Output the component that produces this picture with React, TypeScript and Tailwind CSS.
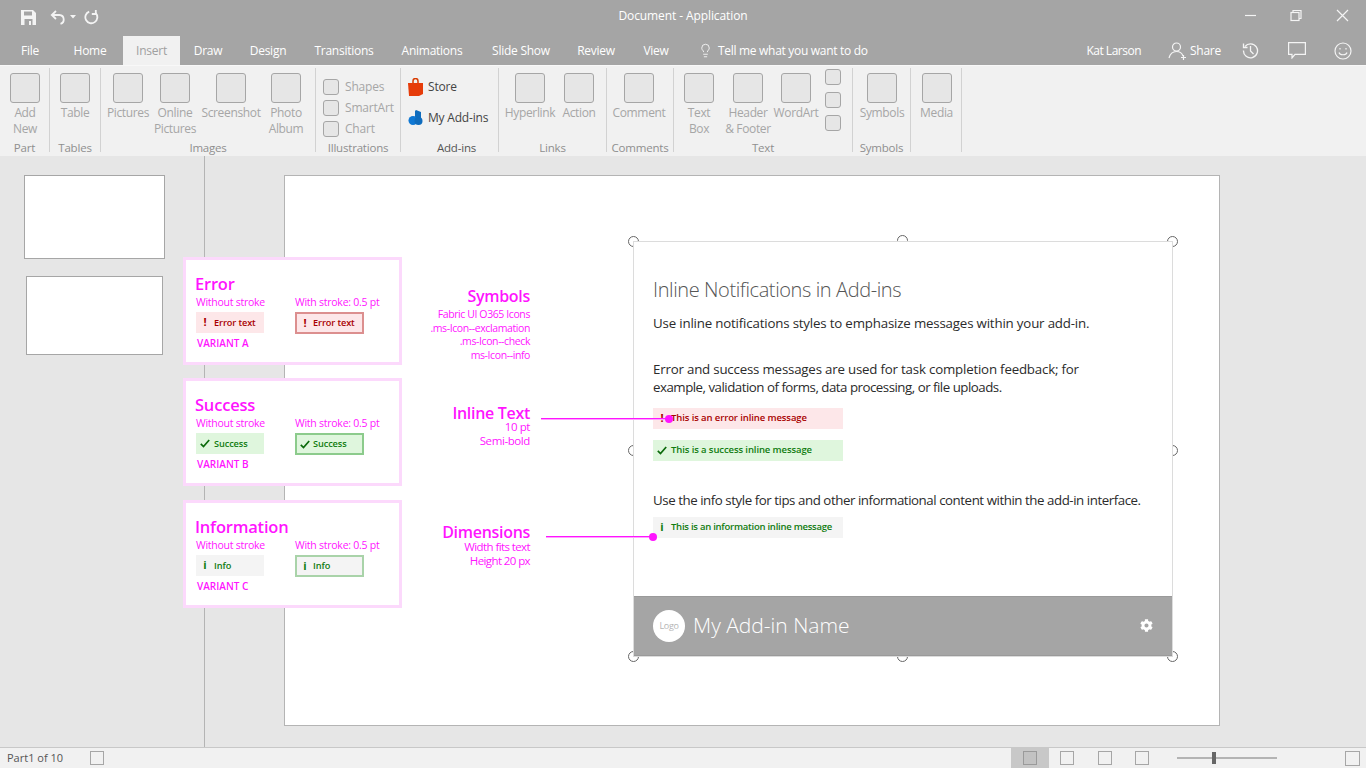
import { Lightbulb } from "lucide-react";
import { FaCog } from "react-icons/fa";

type RibbonItem = { top: string; bottom?: string; width: string };

function Square({ className = "w-[30px] h-[30px]" }: { className?: string }) {
    return <div className={`${className} shrink-0 bg-[#e6e6e6] border-[1.5px] border-[#a6a6a6] rounded-[3px]`} />;
}

function RibbonButton({ item }: { item: RibbonItem }) {
    return (
        <div className={`${item.width} shrink-0 flex flex-col items-center`}>
            <Square />
            <div className="mt-[2px] text-[12px] leading-[16px] tracking-[-0.35px] text-[#a6a6a6] text-center whitespace-nowrap">
                <div>{item.top}</div>
                {item.bottom && <div>{item.bottom}</div>}
            </div>
        </div>
    );
}

function RibbonGroup({ label, className, labelClass = "text-[#8f8f8f]", children }: { label: string; className: string; labelClass?: string; children: React.ReactNode }) {
    return (
        <div className={`${className} shrink-0 h-[84px] mt-[2px] pt-[5px] border-r-[1.5px] border-[#d2d2d2] flex flex-col`}>
            <div className="flex flex-1 min-h-0">{children}</div>
            <div className={`-mb-[3px] h-[14px] text-[11.5px] leading-[14px] tracking-[-0.2px] text-center whitespace-nowrap ${labelClass}`}>{label}</div>
        </div>
    );
}

function SmallCheck({ label }: { label: string }) {
    return (
        <div className="flex items-center h-[21px] gap-[6px]">
            <Square className="w-[16px] h-[16px]" />
            <span className="text-[12px] tracking-[-0.2px] text-[#a6a6a6] whitespace-nowrap">{label}</span>
        </div>
    );
}

function Ribbon() {
    return (
        <div className="h-[91px] bg-[#f1f1f1] border-t border-[#f8f8f8] flex">
            <RibbonGroup label="Part" className="w-[50px]">
                <RibbonButton item={{ top: "Add", bottom: "New", width: "w-[50px]" }} />
            </RibbonGroup>
            <RibbonGroup label="Tables" className="w-[51px]">
                <RibbonButton item={{ top: "Table", width: "w-[50px]" }} />
            </RibbonGroup>
            <RibbonGroup label="Images" className="w-[215px]">
                <div className="w-[2px]" />
                <RibbonButton item={{ top: "Pictures", width: "w-[50px]" }} />
                <RibbonButton item={{ top: "Online", bottom: "Pictures", width: "w-[44px]" }} />
                <RibbonButton item={{ top: "Screenshot", width: "w-[68px]" }} />
                <RibbonButton item={{ top: "Photo", bottom: "Album", width: "w-[42px]" }} />
            </RibbonGroup>
            <RibbonGroup label="Illustrations" className="w-[85px]">
                <div className="pl-[7px] pt-[3px]">
                    <SmallCheck label="Shapes" />
                    <SmallCheck label="SmartArt" />
                    <SmallCheck label="Chart" />
                </div>
            </RibbonGroup>
            <RibbonGroup label="Add-ins" labelClass="text-[#555555] pl-[14px]" className="w-[98px]">
                <div className="pl-[7px] pt-[4px] text-[12px] tracking-[-0.2px] text-[#444444]">
                    <div className="flex items-center gap-[5px] h-[20px]">
                        <svg width="15" height="18" viewBox="0 0 15 18">
                            <path d="M5 5V3a2.5 2.5 0 0 1 5 0v2" fill="none" stroke="#d83b01" strokeWidth="1.5" />
                            <path d="M0 5h15v11l-4 2H1z" fill="#e63c0a" />
                        </svg>
                        <span>Store</span>
                    </div>
                    <div className="flex items-center gap-[5px] h-[20px] mt-[11px]">
                        <svg width="15" height="16" viewBox="0 0 15 16">
                            <path d="M8 0l5 2v7H7V1z" fill="#0f6cbd" />
                            <circle cx="5" cy="10.500" r="4.500" fill="#0f78d4" />
                            <circle cx="10.500" cy="11" r="4" fill="#0f6cbd" />
                        </svg>
                        <span className="whitespace-nowrap">My Add-ins</span>
                    </div>
                </div>
            </RibbonGroup>
            <RibbonGroup label="Links" className="w-[108px]">
                <div className="w-[3px]" />
                <RibbonButton item={{ top: "Hyperlink", width: "w-[56px]" }} />
                <RibbonButton item={{ top: "Action", width: "w-[42px]" }} />
            </RibbonGroup>
            <RibbonGroup label="Comments" className="w-[67px]">
                <div className="w-[2px]" />
                <RibbonButton item={{ top: "Comment", width: "w-[60px]" }} />
            </RibbonGroup>
            <RibbonGroup label="Text" className="w-[179px]">
                <div className="w-[2px]" />
                <RibbonButton item={{ top: "Text", bottom: "Box", width: "w-[46px]" }} />
                <RibbonButton item={{ top: "Header", bottom: "& Footer", width: "w-[52px]" }} />
                <RibbonButton item={{ top: "WordArt", width: "w-[44px]" }} />
                <div className="ml-[7px] -mt-[4px] flex flex-col gap-[7px]">
                    <Square className="w-[16px] h-[16px]" />
                    <Square className="w-[16px] h-[16px]" />
                    <Square className="w-[16px] h-[16px]" />
                </div>
            </RibbonGroup>
            <RibbonGroup label="Symbols" className="w-[58px]">
                <RibbonButton item={{ top: "Symbols", width: "w-[58px]" }} />
            </RibbonGroup>
            <RibbonGroup label="" className="w-[51px]">
                <RibbonButton item={{ top: "Media", width: "w-[51px]" }} />
            </RibbonGroup>
        </div>
    );
}

function TitleBar() {
    const tabs = [
        { name: "File", w: "w-[60px]" },
        { name: "Home", w: "w-[63px] pr-[3px]" },
        { name: "Insert", w: "w-[57px]", active: true },
        { name: "Draw", w: "w-[56px]" },
        { name: "Design", w: "w-[64px]" },
        { name: "Transitions", w: "w-[88px]" },
        { name: "Animations", w: "w-[88px]" },
        { name: "Slide Show", w: "w-[90px]" },
        { name: "Review", w: "w-[60px]" },
        { name: "View", w: "w-[60px]" },
    ];
    return (
        <div className="h-[65px] bg-[#a5a5a5] text-white">
            <div className="relative h-[36px] pb-[2px] flex items-center">
                <svg className="ml-[21px]" width="15" height="15" viewBox="0 0 15 15">
                    <path d="M0 0h12l3 3v12H0z" fill="#f4f4f4" />
                    <rect x="3" y="1.5" width="8" height="4" fill="#a5a5a5" />
                    <rect x="3.5" y="9" width="8" height="6" fill="#a5a5a5" />
                    <rect x="8" y="11" width="2" height="4" fill="#f4f4f4" />
                </svg>
                <svg className="ml-[14px]" width="16" height="16" viewBox="0 0 16 16" fill="none" stroke="#f4f4f4" strokeWidth="1.8">
                    <path d="M6 2L1.8 6 6 10" />
                    <path d="M2 6h7.5a4.5 4.5 0 0 1 1 8.8" />
                </svg>
                <svg className="ml-[4px]" width="6" height="4" viewBox="0 0 6 4"><path d="M0 0h6L3 3.5z" fill="#f4f4f4" /></svg>
                <svg className="ml-[8px]" width="15" height="15" viewBox="0 0 15 15" fill="none" stroke="#f4f4f4" strokeWidth="1.8">
                    <path d="M5.2 1.6a6 6 0 1 0 6.6 1.6" />
                    <path d="M11.8 0v4h-4" />
                </svg>
                <div className="absolute left-0 right-0 top-[7px] text-center text-[12px] leading-[18px] tracking-[-0.1px]">Document - Application</div>
                <div className="absolute top-0 right-0 h-[30px]">
                    <svg width="121" height="30" viewBox="0 0 121 30" fill="none" stroke="#f4f4f4" strokeWidth="1.2">
                        <path d="M0 15.5h11" />
                        <rect x="46" y="12.5" width="8" height="8" />
                        <path d="M48 12.5v-2h8v8h-2" />
                        <path d="M92 10l11 11M103 10L92 21" />
                    </svg>
                </div>
            </div>
            <div className="h-[29px] flex items-stretch text-[12px] tracking-[-0.25px]">
                {tabs.map((t) => (
                    <div key={t.name} className={`${t.w} flex items-center justify-center whitespace-nowrap ${t.active ? "bg-[#f1f1f1] text-[#a0a0a0]" : ""}`}>
                        {t.name}
                    </div>
                ))}
                <div className="ml-[12px] flex items-center gap-[5px]">
                    <Lightbulb size={15} strokeWidth={1.3} />
                    <span className="whitespace-nowrap tracking-[-0.3px]">Tell me what you want to do</span>
                </div>
                <div className="ml-auto flex items-center pr-[14px]">
                    <span className="whitespace-nowrap tracking-[-0.5px]">Kat Larson</span>
                    <svg className="ml-[27px]" width="19" height="18" viewBox="0 0 19 18" fill="none" stroke="#f4f4f4" strokeWidth="1.2">
                        <circle cx="8.5" cy="5" r="4" />
                        <path d="M1 16c1-4 4-6.500 7.500-6.500S14 11 15 14" />
                        <path d="M13 15.500h5M15.500 13v5" />
                    </svg>
                    <span className="ml-[3px]">Share</span>
                    <svg className="ml-[21px]" width="17" height="17" viewBox="0 0 17 17" fill="none" stroke="#f4f4f4" strokeWidth="1.3">
                        <path d="M3 4.500A7 7 0 1 1 1.500 8.500" />
                        <path d="M1.500 1.500v4h4" />
                        <path d="M8.500 4v5l3 3" />
                    </svg>
                    <svg className="ml-[29px]" width="18" height="17" viewBox="0 0 18 17" fill="none" stroke="#f4f4f4" strokeWidth="1.2">
                        <path d="M.6.600h16.800v11.800H7L4 16v-3.600H.6z" />
                    </svg>
                    <svg className="ml-[28px]" width="18" height="18" viewBox="0 0 18 18" fill="none" stroke="#f4f4f4" strokeWidth="1.2">
                        <circle cx="9" cy="9" r="8" />
                        <path d="M5 10.500c1 3 7 3 8 0" />
                        <path d="M6 6v1.500M12 6v1.500" />
                    </svg>
                </div>
            </div>
        </div>
    );
}

function Check({ color }: { color: string }) {
    return (
        <svg width="10" height="9" viewBox="0 0 10 9" fill="none" stroke={color} strokeWidth="1.7" className="shrink-0">
            <path d="M.8 4.800L3.500 7.500 9.200 1" />
        </svg>
    );
}

function Chip({ kind, text, stroke }: { kind: "error" | "success" | "info"; text: string; stroke?: boolean }) {
    const bg = kind === "error" ? "bg-[#fde7e9]" : kind === "success" ? "bg-[#dff6dd]" : "bg-[#f4f4f4]";
    const fg = kind === "error" ? "text-[#a80000]" : "text-[#107c10]";
    const border = !stroke ? "w-[68px] h-[21px]" : kind === "error" ? "border-2 border-[#dc8f8f] h-[22px] w-[69px]" : kind === "success" ? "border-2 border-[#8ccb8c] h-[22px] w-[69px]" : "border-2 border-[#a9d3a9] h-[22px] w-[69px]";
    return (
        <div className={`flex items-center text-[9.2px] font-semibold tracking-[-0.1px] ${bg} ${fg} ${border}`}>
            <span className={`${stroke ? "w-[16px] ml-[0px]" : "w-[18px]"} flex justify-center shrink-0 text-[11px] font-bold`}>
                {kind === "error" && "!"}
                {kind === "success" && <Check color="#0b6a0b" />}
                {kind === "info" && "i"}
            </span>
            <span className="whitespace-nowrap">{text}</span>
        </div>
    );
}

function VariantCard({ title, kind, chip, variant, className }: { title: string; kind: "error" | "success" | "info"; chip: string; variant: string; className: string }) {
    return (
        <div className={`${className} absolute left-[183px] w-[219px] h-[108px] bg-white border-[3px] border-[#fcd9fc] pl-[10px] pt-[14px] text-[#ff14ff]`}>
            <div className="-ml-[1px] text-[16.5px] font-semibold leading-[20px] tracking-[-0.2px]">{title}</div>
            <div className="mt-[1px] grid grid-cols-[99px_1fr] text-[10.5px] leading-[14px] tracking-[-0.25px] whitespace-nowrap">
                <div>Without stroke</div>
                <div>With stroke: 0.5 pt</div>
            </div>
            <div className="grid grid-cols-[99px_1fr] mt-[3px]">
                <Chip kind={kind} text={chip} />
                <Chip kind={kind} text={chip} stroke />
            </div>
            <div className="mt-[2px] ml-[1px] text-[10px] leading-[14px] font-semibold">{variant}</div>
        </div>
    );
}

function Note({ title, lines, className, lineClass }: { title: string; lines: string[]; className: string; lineClass: string }) {
    return (
        <div className={`${className} absolute right-[836px] text-right text-[#ff14ff] whitespace-nowrap`}>
            <div className="text-[16px] font-semibold leading-[14px] tracking-[-0.3px]">{title}</div>
            <div className={lineClass}>
                {lines.map((l) => (
                    <div key={l}>{l}</div>
                ))}
            </div>
        </div>
    );
}

function InlineMessage({ kind, text, className }: { kind: "error" | "success" | "info"; text: string; className: string }) {
    const bg = kind === "error" ? "bg-[#fde7e9]" : kind === "success" ? "bg-[#dff6dd]" : "bg-[#f4f4f4]";
    const fg = kind === "error" ? "text-[#a80000]" : "text-[#107c10]";
    return (
        <div className={`${className} ${bg} ${fg} w-[190px] h-[21px] flex items-center text-[9.5px] font-semibold whitespace-nowrap`}>
            <span className="w-[18px] flex justify-center shrink-0 text-[11px] font-bold tracking-normal">
                {kind === "error" && "!"}
                {kind === "success" && <Check color="#0b6a0b" />}
                {kind === "info" && "i"}
            </span>
            {text}
        </div>
    );
}

function Handle({ className }: { className: string }) {
    return <div className={`${className} absolute w-[11px] h-[11px] rounded-full bg-white border border-[#666666]`} />;
}

function AddIn() {
    return (
        <>
            <Handle className="left-[343px] top-[60px]" />
            <Handle className="left-[612px] top-[59px]" />
            <Handle className="left-[882px] top-[60px]" />
            <Handle className="left-[343px] top-[269px]" />
            <Handle className="left-[882px] top-[269px]" />
            <Handle className="left-[343px] top-[475px]" />
            <Handle className="left-[612px] top-[475px]" />
            <Handle className="left-[882px] top-[475px]" />
            <div className="absolute left-[348px] top-[65px] w-[540px] h-[416px] bg-white border border-[#dcdcdc] flex flex-col">
                <div className="flex-1 pl-[19px] text-[13.3px] text-[#2b2b2b]">
                    <div className="mt-[35px] text-[20px] leading-[26px] font-light text-[#555555] tracking-[-0.4px]">Inline Notifications in Add-ins</div>
                    <p className="mt-[11px] leading-[18px] tracking-[-0.18px] whitespace-nowrap">Use inline notifications styles to emphasize messages within your add-in.</p>
                    <div className="mt-[28px] leading-[18px] whitespace-nowrap">
                        <p className="tracking-[-0.2px]">Error and success messages are used for task completion feedback; for</p>
                        <p className="tracking-[-0.5px]">example, validation of forms, data processing, or file uploads.</p>
                    </div>
                    <InlineMessage kind="error" text="This is an error inline message" className="mt-[12px] tracking-[-0.1px]" />
                    <InlineMessage kind="success" text="This is a success inline message" className="mt-[11px] tracking-[-0.1px]" />
                    <p className="mt-[30px] leading-[18px] tracking-[-0.45px] whitespace-nowrap">Use the info style for tips and other informational content within the add-in interface.</p>
                    <InlineMessage kind="info" text="This is an information inline message" className="mt-[8px] tracking-[-0.25px]" />
                </div>
                <div className="h-[60px] bg-[#a5a5a5] border-y border-[#9a9a9a] flex items-center pl-[19px] pr-[19px] text-white">
                    <div className="w-[32px] h-[32px] rounded-full bg-white flex items-center justify-center text-[9px] tracking-[-0.3px] text-[#b5b5b5]">Logo</div>
                    <div className="ml-[8px] text-[21px] font-light">My Add-in Name</div>
                    <FaCog className="ml-auto -mt-[2px]" size={13} />
                </div>
            </div>
        </>
    );
}

function StatusBox({ highlighted }: { highlighted?: boolean }) {
    return (
        <div className={`w-[37.5px] h-[21px] flex items-center justify-center ${highlighted ? "bg-[#c8c8c8]" : ""}`}>
            <div className={`w-[14px] h-[14px] border-[1.5px] ${highlighted ? "border-[#9a9a9a] bg-[#c2c2c2]" : "border-[#a6a6a6] bg-[#f1f1f1]"}`} />
        </div>
    );
}

export default function App() {
    return (
        <div className="w-[1366px] h-[768px] overflow-hidden flex flex-col bg-[#e6e6e6] font-['Open_Sans',sans-serif]">
            <TitleBar />
            <Ribbon />
            <div className="relative flex-1 flex min-h-0">
                <div className="w-[205px] shrink-0 border-r-[1.5px] border-[#b4b4b4] pt-[19px]">
                    <div className="ml-[24px] w-[141px] h-[84px] bg-white border-[1.5px] border-[#a6a6a6]" />
                    <div className="ml-[26px] mt-[17px] w-[137px] h-[79px] bg-white border-[1.5px] border-[#a6a6a6]" />
                </div>
                <div className="pl-[79px] pt-[19px]">
                    <div className="relative w-[936px] h-[551px] bg-white border-[1.5px] border-[#b4b4b4]">
                        <AddIn />
                    </div>
                </div>

                <VariantCard title="Error" kind="error" chip="Error text" variant="VARIANT A" className="top-[101px]" />
                <VariantCard title="Success" kind="success" chip="Success" variant="VARIANT B" className="top-[222px]" />
                <VariantCard title="Information" kind="info" chip="Info" variant="VARIANT C" className="top-[344px]" />

                <Note title="Symbols" lines={["Fabric UI O365 Icons", ".ms-Icon--exclamation", ".ms-Icon--check", "ms-Icon--info"]} className="top-[133px]" lineClass="mt-[5px] text-[10.5px] leading-[13.5px] tracking-[-0.4px]" />
                <Note title="Inline Text" lines={["10 pt", "Semi-bold"]} className="top-[250px]" lineClass="text-[11.5px] leading-[13.5px] tracking-[-0.4px]" />
                <Note title="Dimensions" lines={["Width fits text", "Height 20 px"]} className="top-[369px]" lineClass="mt-[1px] text-[11.5px] leading-[14px] tracking-[-0.6px]" />

                <div className="absolute left-[541px] top-[262px] w-[128px] h-[2px] bg-[#ffa0ff] border-t border-[#ff14ff]" />
                <div className="absolute left-[665px] top-[259px] w-[8px] h-[8px] rounded-full bg-[#ff14ff]" />
                <div className="absolute left-[546px] top-[380px] w-[107px] h-[2px] bg-[#ffa0ff] border-t border-[#ff14ff]" />
                <div className="absolute left-[649px] top-[377px] w-[8px] h-[8px] rounded-full bg-[#ff14ff]" />
            </div>
            <div className="h-[21px] shrink-0 bg-[#f1f1f1] border-t-[1.5px] border-[#c8c8c8] flex items-center text-[11px] text-[#555555]">
                <span className="ml-[7px] w-[83px] whitespace-nowrap">Part1 of 10</span>
                <div className="w-[14px] h-[14px] border-[1.5px] border-[#a6a6a6]" />
                <div className="ml-[907px]"><StatusBox highlighted /></div>
                <StatusBox />
                <StatusBox />
                <StatusBox />
                <div className="relative ml-[16px] w-[100px] h-[2px] bg-[#b4b4b4]">
                    <div className="absolute left-[35px] -top-[5px] w-[4px] h-[12px] bg-[#666666]" />
                </div>
                <div className="ml-[68px] w-[15px] h-[15px] border-[1.5px] border-[#a6a6a6]" />
            </div>
        </div>
    );
}
